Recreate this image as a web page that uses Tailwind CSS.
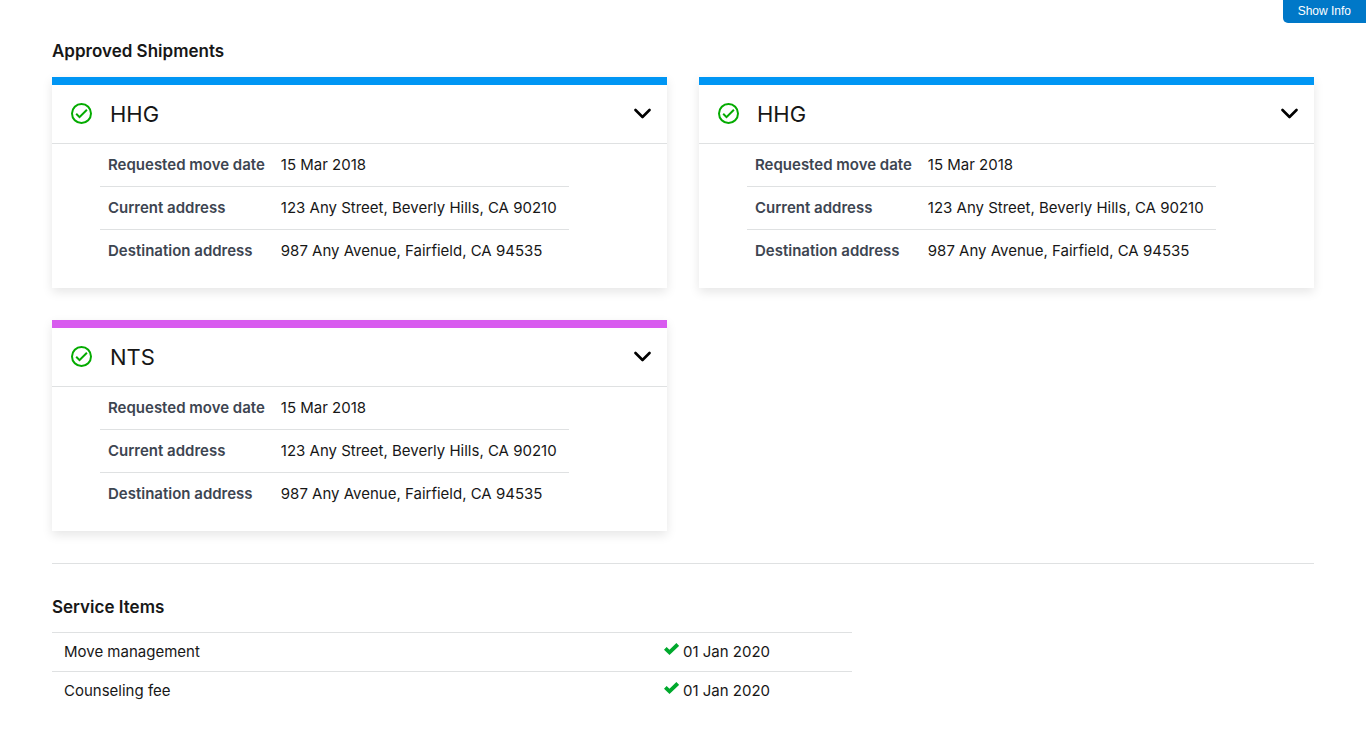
<!DOCTYPE html>
<html lang="en">
<head>
<meta charset="utf-8">
<meta name="viewport" content="width=device-width, initial-scale=1">
<title>Approved Shipments</title>
<script src="https://cdn.jsdelivr.net/npm/@tailwindcss/browser@4"></script>
</head>
<body class="bg-white font-['Inter','Liberation_Sans',sans-serif] text-[15px] leading-5 text-[#171717]">
<svg class="hidden" aria-hidden="true">
  <symbol id="circle-check" viewBox="0 0 24 24"><path fill="currentColor" d="M11.500 1a10.500 10.500 0 1 0 0 21 10.500 10.500 0 0 0 0-21zm0 19a8.500 8.500 0 1 1 0-17 8.500 8.500 0 0 1 0 17zm4.700-13L9.500 13.700 6.900 11.100 5.500 12.500l4 4L17.600 8.400z"/></symbol>
  <symbol id="chevron" viewBox="0 0 18 12"><path fill="none" stroke="currentColor" stroke-width="2.600" stroke-linecap="round" stroke-linejoin="round" d="M2.500 2 9.500 9 16.500 2"/></symbol>
  <symbol id="check" viewBox="0 0 15 15"><path fill="none" stroke="currentColor" stroke-width="3.800" d="M1.300 6.300 5.500 10.300 13.700 2.500"/></symbol>
</svg>
<button type="button" class="absolute top-0 right-0 h-[23px] rounded-bl-[5px] bg-[#0078c8] px-[15px] pb-0.5 font-['Liberation_Sans',Arial,sans-serif] text-xs text-white">Show Info</button>
<main class="px-[52px] pt-10 pb-8">
  <section class="border-b border-[#dfe1e2] pb-8">
    <h1 class="mb-[15px] text-[17px] leading-[22px] font-semibold">Approved Shipments</h1>
    <div class="grid grid-cols-2 gap-8">
      <article class="border-t-8 border-[#0096f4] pb-4 shadow-[0_4px_10px_rgba(0,0,0,0.1)]">
        <header class="flex h-[59px] items-center border-b border-[#dfe1e2] pr-4 pl-[18px]">
          <svg class="mr-4 size-6 text-[#04ab00]" aria-hidden="true"><use href="#circle-check"/></svg>
          <h2 class="flex-1 text-[22px] leading-7">HHG</h2>
          <button type="button" aria-label="Toggle shipment details" class="text-black"><svg class="h-3 w-[18px]"><use href="#chevron"/></svg></button>
        </header>
        <table class="ml-12 w-[469px] border-separate border-spacing-0 whitespace-nowrap">
          <tbody>
            <tr class="h-[43px]"><th scope="row" class="w-[172px] border-b border-[#dfe1e2] px-2 text-left font-semibold text-[#3d4551]">Requested move date</th><td class="border-b border-[#dfe1e2] px-2">15 Mar 2018</td></tr>
            <tr class="h-[43px]"><th scope="row" class="border-b border-[#dfe1e2] px-2 text-left font-semibold text-[#3d4551]">Current address</th><td class="border-b border-[#dfe1e2] px-2">123 Any Street, Beverly Hills, CA 90210</td></tr>
            <tr class="h-[42px]"><th scope="row" class="px-2 text-left font-semibold text-[#3d4551]">Destination address</th><td class="px-2">987 Any Avenue, Fairfield, CA 94535</td></tr>
          </tbody>
        </table>
      </article>
      <article class="border-t-8 border-[#0096f4] pb-4 shadow-[0_4px_10px_rgba(0,0,0,0.1)]">
        <header class="flex h-[59px] items-center border-b border-[#dfe1e2] pr-4 pl-[18px]">
          <svg class="mr-4 size-6 text-[#04ab00]" aria-hidden="true"><use href="#circle-check"/></svg>
          <h2 class="flex-1 text-[22px] leading-7">HHG</h2>
          <button type="button" aria-label="Toggle shipment details" class="text-black"><svg class="h-3 w-[18px]"><use href="#chevron"/></svg></button>
        </header>
        <table class="ml-12 w-[469px] border-separate border-spacing-0 whitespace-nowrap">
          <tbody>
            <tr class="h-[43px]"><th scope="row" class="w-[172px] border-b border-[#dfe1e2] px-2 text-left font-semibold text-[#3d4551]">Requested move date</th><td class="border-b border-[#dfe1e2] px-2">15 Mar 2018</td></tr>
            <tr class="h-[43px]"><th scope="row" class="border-b border-[#dfe1e2] px-2 text-left font-semibold text-[#3d4551]">Current address</th><td class="border-b border-[#dfe1e2] px-2">123 Any Street, Beverly Hills, CA 90210</td></tr>
            <tr class="h-[42px]"><th scope="row" class="px-2 text-left font-semibold text-[#3d4551]">Destination address</th><td class="px-2">987 Any Avenue, Fairfield, CA 94535</td></tr>
          </tbody>
        </table>
      </article>
      <article class="border-t-8 border-[#d85bef] pb-4 shadow-[0_4px_10px_rgba(0,0,0,0.1)]">
        <header class="flex h-[59px] items-center border-b border-[#dfe1e2] pr-4 pl-[18px]">
          <svg class="mr-4 size-6 text-[#04ab00]" aria-hidden="true"><use href="#circle-check"/></svg>
          <h2 class="flex-1 text-[22px] leading-7">NTS</h2>
          <button type="button" aria-label="Toggle shipment details" class="text-black"><svg class="h-3 w-[18px]"><use href="#chevron"/></svg></button>
        </header>
        <table class="ml-12 w-[469px] border-separate border-spacing-0 whitespace-nowrap">
          <tbody>
            <tr class="h-[43px]"><th scope="row" class="w-[172px] border-b border-[#dfe1e2] px-2 text-left font-semibold text-[#3d4551]">Requested move date</th><td class="border-b border-[#dfe1e2] px-2">15 Mar 2018</td></tr>
            <tr class="h-[43px]"><th scope="row" class="border-b border-[#dfe1e2] px-2 text-left font-semibold text-[#3d4551]">Current address</th><td class="border-b border-[#dfe1e2] px-2">123 Any Street, Beverly Hills, CA 90210</td></tr>
            <tr class="h-[42px]"><th scope="row" class="px-2 text-left font-semibold text-[#3d4551]">Destination address</th><td class="px-2">987 Any Avenue, Fairfield, CA 94535</td></tr>
          </tbody>
        </table>
      </article>
    </div>
  </section>
  <section class="pt-8">
    <h1 class="mb-[14px] text-[17px] leading-[22px] font-semibold">Service Items</h1>
    <table class="w-full max-w-[800px] table-fixed border-collapse">
      <tbody>
        <tr class="h-[39px] border-t border-[#dfe1e2]"><td class="w-3/4 px-3">Move management</td><td class="pl-3"><div class="flex gap-1"><svg class="size-[15px] text-[#00a92d]" aria-hidden="true"><use href="#check"/></svg>01 Jan 2020</div></td></tr>
        <tr class="h-[39px] border-t border-[#dfe1e2]"><td class="px-3">Counseling fee</td><td class="pl-3"><div class="flex gap-1"><svg class="size-[15px] text-[#00a92d]" aria-hidden="true"><use href="#check"/></svg>01 Jan 2020</div></td></tr>
      </tbody>
    </table>
  </section>
</main>
</body>
</html>
